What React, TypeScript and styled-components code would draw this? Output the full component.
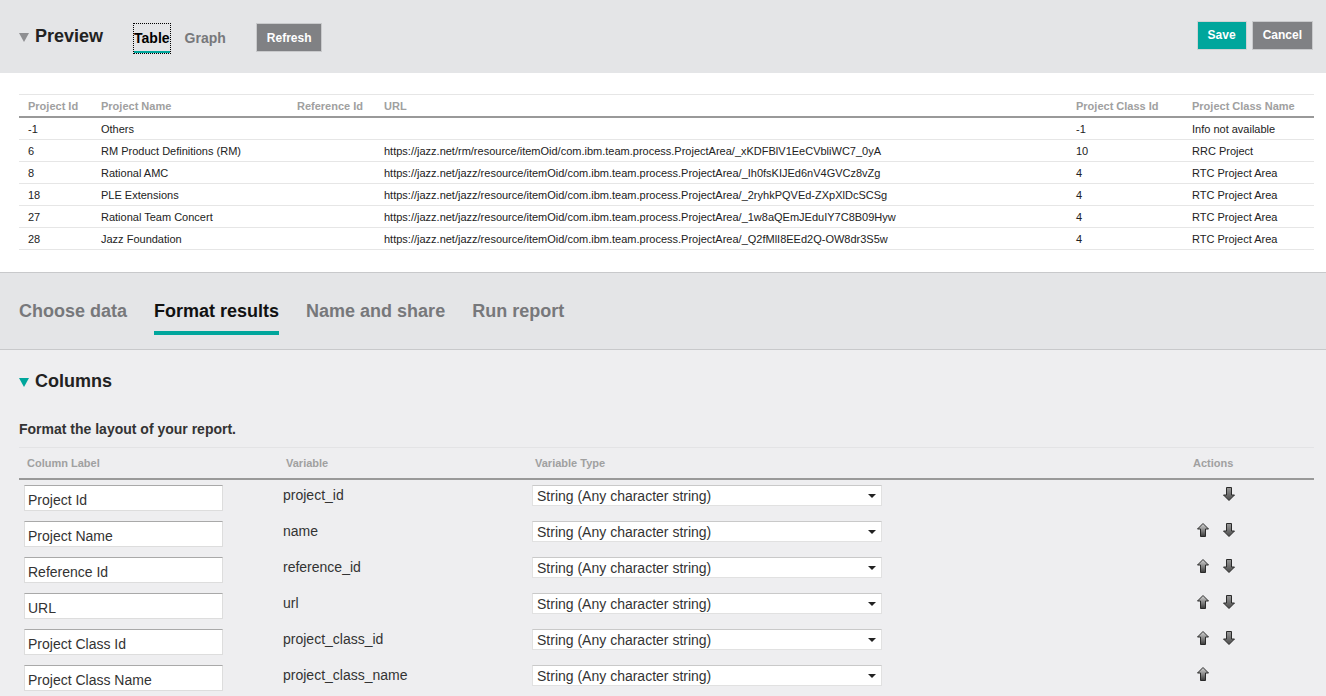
import React from 'react';
import styled, { createGlobalStyle } from 'styled-components';

const GlobalStyle = createGlobalStyle`
  html, body {
    margin: 0;
    padding: 0;
    background: #eeeef0;
    font-family: "Liberation Sans", Arial, sans-serif;
    color: #222;
  }
`;

const TEAL = '#00a69c';

const previewRows = [
  ['-1', 'Others', '', '', '-1', 'Info not available'],
  ['6', 'RM Product Definitions (RM)', '', 'https://jazz.net/rm/resource/itemOid/com.ibm.team.process.ProjectArea/_xKDFBlV1EeCVbliWC7_0yA', '10', 'RRC Project'],
  ['8', 'Rational AMC', '', 'https://jazz.net/jazz/resource/itemOid/com.ibm.team.process.ProjectArea/_Ih0fsKIJEd6nV4GVCz8vZg', '4', 'RTC Project Area'],
  ['18', 'PLE Extensions', '', 'https://jazz.net/jazz/resource/itemOid/com.ibm.team.process.ProjectArea/_2ryhkPQVEd-ZXpXlDcSCSg', '4', 'RTC Project Area'],
  ['27', 'Rational Team Concert', '', 'https://jazz.net/jazz/resource/itemOid/com.ibm.team.process.ProjectArea/_1w8aQEmJEduIY7C8B09Hyw', '4', 'RTC Project Area'],
  ['28', 'Jazz Foundation', '', 'https://jazz.net/jazz/resource/itemOid/com.ibm.team.process.ProjectArea/_Q2fMlI8EEd2Q-OW8dr3S5w', '4', 'RTC Project Area'],
];

const previewCols = [
  { label: 'Project Id', width: 73 },
  { label: 'Project Name', width: 196 },
  { label: 'Reference Id', width: 87 },
  { label: 'URL', width: 692 },
  { label: 'Project Class Id', width: 116 },
  { label: 'Project Class Name', width: 131 },
];

const columnRows = [
  { label: 'Project Id', variable: 'project_id', up: false, down: true },
  { label: 'Project Name', variable: 'name', up: true, down: true },
  { label: 'Reference Id', variable: 'reference_id', up: true, down: true },
  { label: 'URL', variable: 'url', up: true, down: true },
  { label: 'Project Class Id', variable: 'project_class_id', up: true, down: true },
  { label: 'Project Class Name', variable: 'project_class_name', up: true, down: false },
];

const Header = styled.header`
  height: 73px;
  background: #e4e5e7;
  display: flex;
  align-items: center;
  padding: 0 13px 0 19px;
  box-sizing: border-box;
`;

const Triangle = styled.span<{ $color: string }>`
  display: inline-block;
  width: 0;
  height: 0;
  border-left: 5px solid transparent;
  border-right: 5px solid transparent;
  border-top: 9px solid ${p => p.$color};
  margin-right: 6px;
  margin-top: 2px;
`;

const Title = styled.h2`
  margin: 0;
  font-size: 18px;
  font-weight: bold;
  color: #222;
  display: flex;
  align-items: center;
`;

const ViewTabs = styled.div`
  display: flex;
  align-items: center;
  margin-left: 31px;
  gap: 15px;
`;

const ViewTab = styled.span<{ $active?: boolean }>`
  font-size: 14px;
  font-weight: bold;
  color: ${p => (p.$active ? '#000' : '#77787b')};
  padding: 6px 0 5px;
  margin-top: 3px;
  border-bottom: 2px solid ${p => (p.$active ? TEAL : 'transparent')};
  outline: ${p => (p.$active ? '1px dotted #000' : 'none')};
`;

const Button = styled.button<{ $primary?: boolean }>`
  font-family: inherit;
  font-size: 12px;
  font-weight: bold;
  color: #fff;
  background: ${p => (p.$primary ? TEAL : '#808184')};
  border: 1px solid ${p => (p.$primary ? '#d0d3d4' : '#c9cacc')};
  height: 29px;
  padding: 0 10px;
  cursor: pointer;
`;

const RefreshButton = styled(Button)`
  margin-left: 30px;
  margin-top: 2px;
  width: 66px;
`;

const HeaderActions = styled.div`
  margin-left: auto;
  display: flex;
  gap: 5px;
  margin-top: -3px;
`;

const PreviewPanel = styled.section`
  background: #fff;
  padding: 21px 12px 22px 19px;
  border-bottom: 1px solid #c8c9cb;
`;

const DataTable = styled.table`
  width: 1295px;
  border-collapse: collapse;
  table-layout: fixed;
  border-top: 1px solid #e6e6e6;
  font-size: 11px;
`;

const HeadCell = styled.th`
  text-align: left;
  font-weight: bold;
  color: #a0a0a0;
  height: 21px;
  padding: 0 9px;
  border-bottom: 2px solid #999;
`;

const Cell = styled.td`
  height: 21px;
  padding: 0 9px;
  border-bottom: 1px solid #e6e6e6;
  white-space: nowrap;
  overflow: hidden;
  color: #222;
`;

const StepBar = styled.nav`
  height: 76px;
  background: #e4e5e7;
  border-bottom: 1px solid #c8c9cb;
  display: flex;
  align-items: flex-end;
  padding-left: 19px;
  gap: 27px;
`;

const Step = styled.span<{ $active?: boolean }>`
  font-size: 18px;
  font-weight: bold;
  color: ${p => (p.$active ? '#111' : '#77787b')};
  padding-bottom: 9px;
  border-bottom: 4px solid ${p => (p.$active ? TEAL : 'transparent')};
  margin-bottom: 14px;
`;

const FormatPanel = styled.section`
  padding: 21px 12px 0 19px;
  background: #eeeef0;
`;

const SubTitle = styled.p`
  margin: 29px 0 10px;
  font-size: 14px;
  font-weight: bold;
  color: #333;
`;

const ColumnsTable = styled.table`
  width: 1295px;
  border-collapse: collapse;
  table-layout: fixed;
  border-top: 1px solid #e3e3e5;
`;

const ColHead = styled.th`
  text-align: left;
  font-size: 11px;
  font-weight: bold;
  color: #a0a0a0;
  height: 30px;
  padding: 0 8px;
  border-bottom: 2px solid #999;
`;

const ColCell = styled.td`
  vertical-align: top;
  padding: 5px 5px 5px;
  font-size: 14px;
  color: #333;
`;

const VarCell = styled(ColCell)`
  padding-top: 7px;
`;

const TextInput = styled.input`
  box-sizing: border-box;
  width: 199px;
  height: 26px;
  border: 1px solid #ddd;
  border-top-color: #a9a9a9;
  padding: 3px 3px 0;
  font-family: inherit;
  font-size: 14px;
  color: #333;
  background: #fff;
  display: block;
`;

const SelectBox = styled.div`
  box-sizing: border-box;
  width: 350px;
  height: 21px;
  background: #fff;
  border: 1px solid #e1e1e1;
  border-top-color: #c9c9c9;
  display: flex;
  align-items: center;
  justify-content: space-between;
  padding: 0 5px 0 4px;
  font-size: 14px;
  color: #333;
`;

const Caret = styled.span`
  width: 0;
  height: 0;
  border-left: 4px solid transparent;
  border-right: 4px solid transparent;
  border-top: 4px solid #222;
`;

const Actions = styled.div`
  display: flex;
  gap: 14px;
  padding: 2px 0 0 7px;
`;

const ArrowSlot = styled.span`
  width: 12px;
  height: 14px;
  display: inline-block;
`;

const Arrow: React.FC<{ dir: 'up' | 'down' }> = ({ dir }) => {
  const id = `g-${dir}`;
  const d =
    dir === 'up'
      ? 'M6 0.5 L11.5 6 L8.5 6 L8.5 13.5 L3.5 13.5 L3.5 6 L0.5 6 Z'
      : 'M3.5 0.5 L8.5 0.5 L8.5 8 L11.5 8 L6 13.5 L0.5 8 L3.5 8 Z';
  return (
    <svg width="12" height="14" viewBox="0 0 12 14">
      <defs>
        <linearGradient id={id} x1="0" y1="0" x2="0" y2="1">
          <stop offset="0" stopColor={dir === 'up' ? '#d8d8d8' : '#9a9a9a'} />
          <stop offset="1" stopColor={dir === 'up' ? '#3a3a3a' : '#4a4a4a'} />
        </linearGradient>
      </defs>
      <path d={d} fill={`url(#${id})`} stroke="#2a2a2a" strokeWidth="1" strokeLinejoin="round" />
    </svg>
  );
};

const App: React.FC = () => {
  return (
    <>
      <GlobalStyle />
      <Header>
        <Title>
          <Triangle $color="#8e8f92" />
          Preview
        </Title>
        <ViewTabs>
          <ViewTab $active>Table</ViewTab>
          <ViewTab>Graph</ViewTab>
        </ViewTabs>
        <RefreshButton>Refresh</RefreshButton>
        <HeaderActions>
          <Button $primary>Save</Button>
          <Button>Cancel</Button>
        </HeaderActions>
      </Header>

      <PreviewPanel>
        <DataTable>
          <colgroup>
            {previewCols.map(c => (
              <col key={c.label} style={{ width: c.width }} />
            ))}
          </colgroup>
          <thead>
            <tr>
              {previewCols.map(c => (
                <HeadCell key={c.label}>{c.label}</HeadCell>
              ))}
            </tr>
          </thead>
          <tbody>
            {previewRows.map(r => (
              <tr key={r[0]}>
                {r.map((v, i) => (
                  <Cell key={i}>{v}</Cell>
                ))}
              </tr>
            ))}
          </tbody>
        </DataTable>
      </PreviewPanel>

      <StepBar>
        <Step>Choose data</Step>
        <Step $active>Format results</Step>
        <Step>Name and share</Step>
        <Step>Run report</Step>
      </StepBar>

      <FormatPanel>
        <Title>
          <Triangle $color={TEAL} />
          Columns
        </Title>
        <SubTitle>Format the layout of your report.</SubTitle>
        <ColumnsTable>
          <colgroup>
            <col style={{ width: 259 }} />
            <col style={{ width: 249 }} />
            <col style={{ width: 658 }} />
            <col style={{ width: 129 }} />
          </colgroup>
          <thead>
            <tr>
              <ColHead>Column Label</ColHead>
              <ColHead>Variable</ColHead>
              <ColHead>Variable Type</ColHead>
              <ColHead>Actions</ColHead>
            </tr>
          </thead>
          <tbody>
            {columnRows.map(r => (
              <tr key={r.variable}>
                <ColCell>
                  <TextInput defaultValue={r.label} />
                </ColCell>
                <VarCell>{r.variable}</VarCell>
                <ColCell>
                  <SelectBox>
                    String (Any character string)
                    <Caret />
                  </SelectBox>
                </ColCell>
                <ColCell>
                  <Actions>
                    <ArrowSlot>{r.up && <Arrow dir="up" />}</ArrowSlot>
                    <ArrowSlot>{r.down && <Arrow dir="down" />}</ArrowSlot>
                  </Actions>
                </ColCell>
              </tr>
            ))}
          </tbody>
        </ColumnsTable>
      </FormatPanel>
    </>
  );
};

export default App;
